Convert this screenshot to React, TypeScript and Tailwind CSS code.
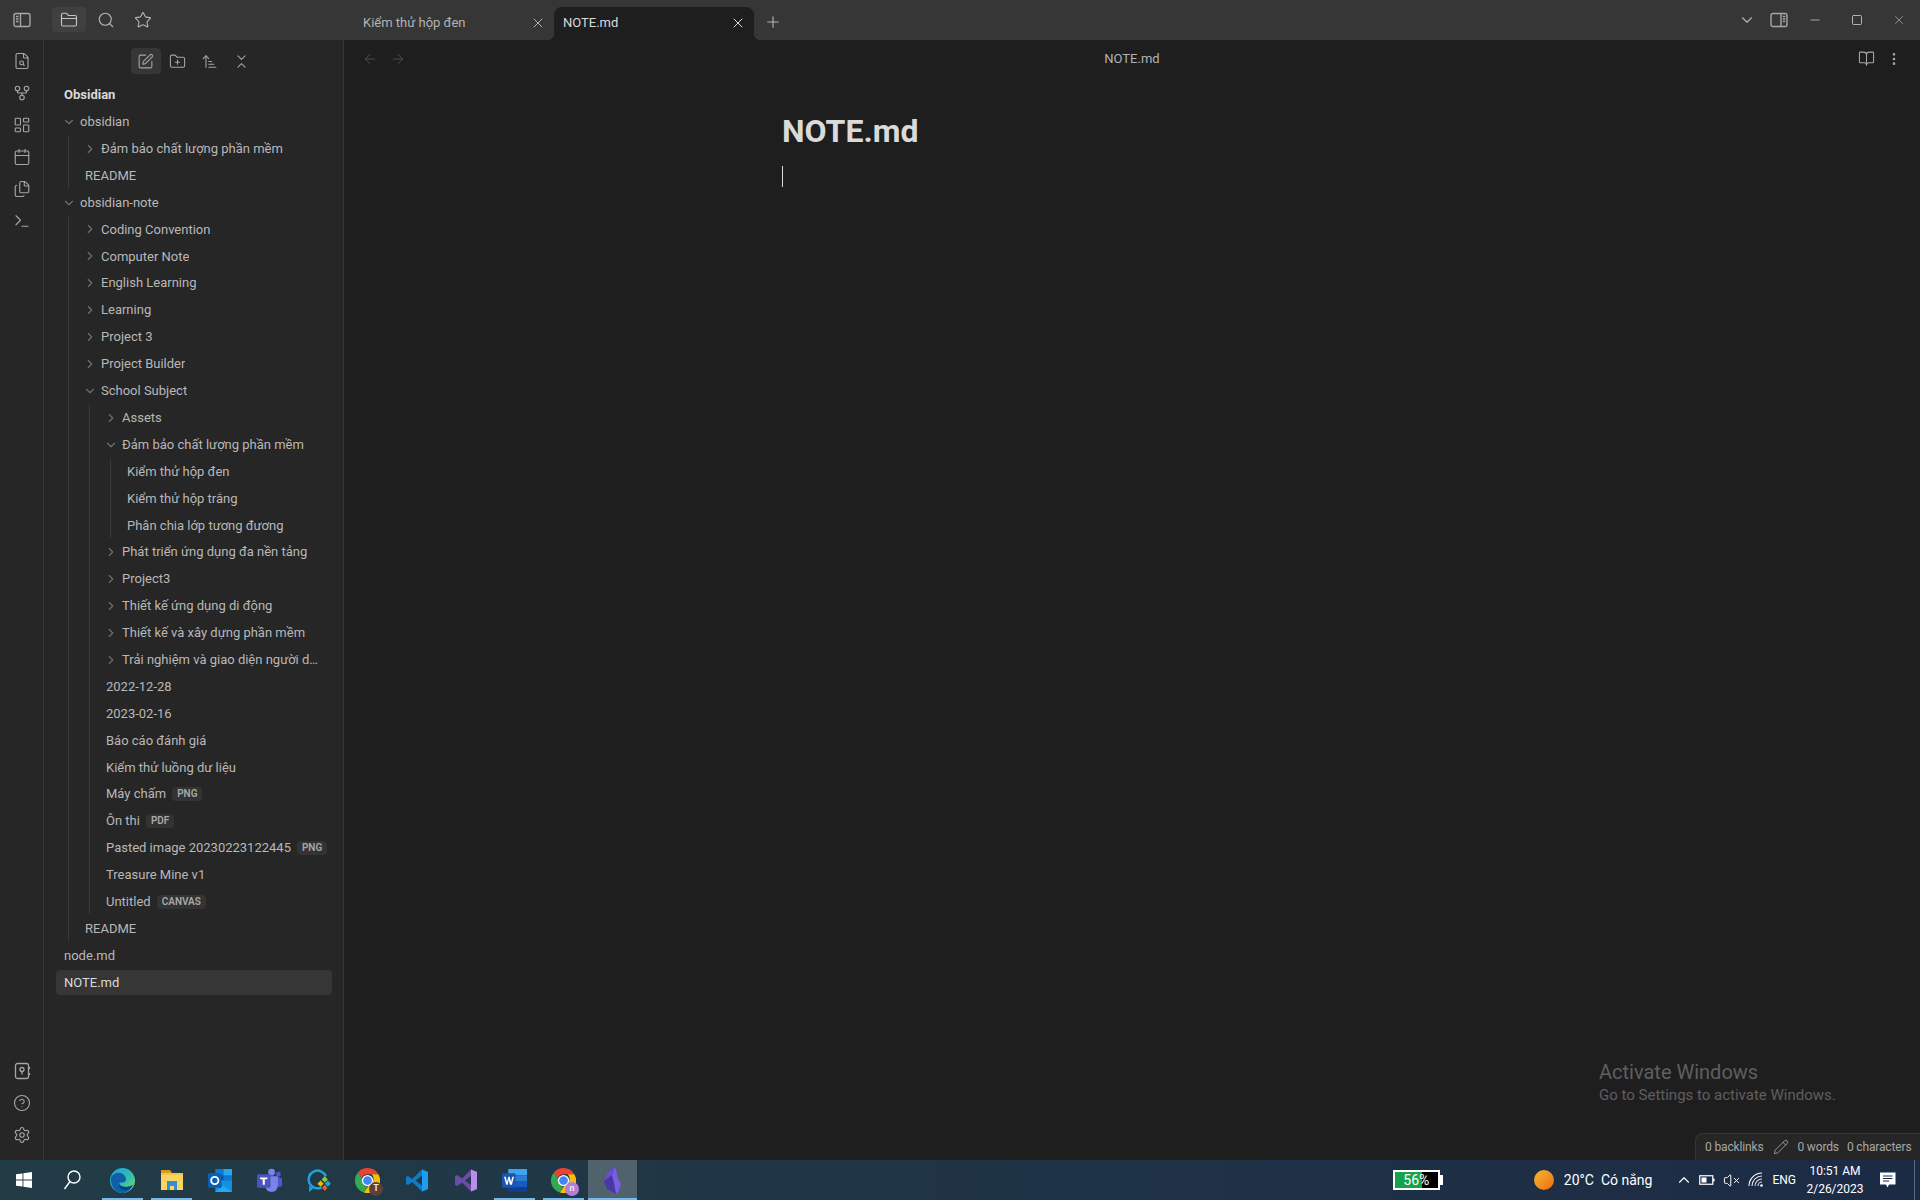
import React from 'react';
import {
  FolderClosed, Search, Star, FileSearch, GitFork, LayoutDashboard, Calendar, Files, Terminal,
  CircleHelp, Settings, SquarePen, FolderPlus, ArrowUpNarrowWide, ChevronsDownUp, ChevronDown,
  ChevronRight, X, Plus, ArrowLeft, ArrowRight, BookOpen, MoreVertical, Minus, Square, Pencil,
  VolumeX, ChevronUp,
} from 'lucide-react';

type TreeNode = { name: string; ext?: string; open?: boolean; children?: TreeNode[]; active?: boolean };

const tree: TreeNode[] = [
  {
    name: 'obsidian', open: true, children: [
      { name: 'Đảm bảo chất lượng phần mềm', children: [] },
      { name: 'README' },
    ],
  },
  {
    name: 'obsidian-note', open: true, children: [
      { name: 'Coding Convention', children: [] },
      { name: 'Computer Note', children: [] },
      { name: 'English Learning', children: [] },
      { name: 'Learning', children: [] },
      { name: 'Project 3', children: [] },
      { name: 'Project Builder', children: [] },
      {
        name: 'School Subject', open: true, children: [
          { name: 'Assets', children: [] },
          {
            name: 'Đảm bảo chất lượng phần mềm', open: true, children: [
              { name: 'Kiểm thử hộp đen' },
              { name: 'Kiểm thử hộp trắng' },
              { name: 'Phân chia lớp tương đương' },
            ],
          },
          { name: 'Phát triển ứng dụng đa nền tảng', children: [] },
          { name: 'Project3', children: [] },
          { name: 'Thiết kế ứng dụng di động', children: [] },
          { name: 'Thiết kế và xây dựng phần mềm', children: [] },
          { name: 'Trải nghiệm và giao diện người dùng', children: [] },
          { name: '2022-12-28' },
          { name: '2023-02-16' },
          { name: 'Báo cáo đánh giá' },
          { name: 'Kiểm thử luồng dư liệu' },
          { name: 'Máy chấm', ext: 'PNG' },
          { name: 'Ôn thi', ext: 'PDF' },
          { name: 'Pasted image 20230223122445', ext: 'PNG' },
          { name: 'Treasure Mine v1' },
          { name: 'Untitled', ext: 'CANVAS' },
        ],
      },
      { name: 'README' },
    ],
  },
  { name: 'node.md' },
  { name: 'NOTE.md', active: true },
];

const TreeRow: React.FC<{ node: TreeNode; root?: boolean }> = ({ node, root }) => {
  if (node.children) {
    return (
      <div>
        <div className={`flex items-center h-[25px] mb-[1.9px] pr-3 text-[#b8b8b8] ${root ? 'pl-[6px]' : 'pl-[14px]'}`}>
          <span className="w-[14px] mr-[4px] shrink-0 flex justify-center text-[#6f6f6f]">
            {node.open ? <ChevronDown size={14} strokeWidth={2} /> : <ChevronRight size={14} strokeWidth={2} />}
          </span>
          <span className="truncate">{node.name}</span>
        </div>
        {node.open && (
          <div className={`border-l border-[#3a3a3a] ${root ? 'ml-[12px]' : 'ml-[20px]'}`}>
            {node.children.map((c, i) => <TreeRow key={i} node={c} />)}
          </div>
        )}
      </div>
    );
  }
  return (
    <div
      className={`flex items-center h-[25px] mb-[1.9px] pr-[4px] rounded ${root ? 'pl-2' : 'pl-4'} ${node.active ? 'bg-[#363636] text-[#dadada]' : 'text-[#b8b8b8]'}`}
    >
      <span className="truncate">{node.name}</span>
      {node.ext && (
        <span className="ml-[6px] px-[5px] h-[14px] shrink-0 flex items-center rounded bg-[#333333] text-[#a8a8a8] text-[10px] font-semibold leading-none">
          {node.ext}
        </span>
      )}
    </div>
  );
};

const PanelLeftIcon = () => (
  <svg width="18" height="18" viewBox="0 0 18 18" fill="none" stroke="#a6a6a6" strokeWidth="1.4">
    <rect x="1" y="2.5" width="16" height="13" rx="2" />
    <path d="M7.5 2.5v13M3 5.500h2.500M3 8h2.500M3 10.500h2.500" />
  </svg>
);

const PanelRightIcon = () => (
  <svg width="18" height="18" viewBox="0 0 18 18" fill="none" stroke="#a6a6a6" strokeWidth="1.4">
    <rect x="1" y="2.5" width="16" height="13" rx="2" />
    <path d="M11 2.500v13M12.800 5.500h2.500M12.800 8h2.500M12.800 10.500h2.500" />
  </svg>
);

const VaultIcon = () => (
  <svg width="18" height="18" viewBox="0 0 18 18" fill="none" stroke="#a6a6a6" strokeWidth="1.3">
    <rect x="2.5" y="1.5" width="13" height="15" rx="2" />
    <circle cx="9" cy="7.5" r="2" />
    <path d="M9 9.500v3M16.500 5v2M16.500 11v2" />
  </svg>
);

const SmallBatteryIcon = () => (
  <svg width="16" height="12" viewBox="0 0 16 12" fill="none">
    <rect x="0.75" y="1.75" width="13" height="8.5" stroke="#fff" strokeWidth="1.2" />
    <rect x="2.5" y="3.5" width="5" height="5" fill="#fff" />
    <rect x="14" y="4.5" width="1.5" height="3" fill="#fff" />
  </svg>
);

const WifiFanIcon = () => (
  <svg width="16" height="16" viewBox="0 0 16 16" fill="none" stroke="#fff" strokeWidth="1.1">
    <path d="M1 14A13 13 0 0 1 14 1" />
    <path d="M4 14A10 10 0 0 1 14 4" opacity="0.85" />
    <path d="M7 14a7 7 0 0 1 7-7" opacity="0.85" />
    <path d="M10 14a4 4 0 0 1 4-4" opacity="0.85" />
    <circle cx="13.500" cy="13.500" r="1.300" fill="#fff" stroke="none" />
  </svg>
);

const TaskSearchIcon = () => (
  <svg width="18" height="20" viewBox="0 0 18 20" fill="none" stroke="#fff" strokeWidth="1.4">
    <circle cx="11" cy="7" r="6" />
    <path d="M7 11.500 1.500 19" />
  </svg>
);

const NotificationIcon = () => (
  <svg width="18" height="18" viewBox="0 0 18 18">
    <path d="M1 1.500h15.500v12H10l-1.500 3-1.500-3H1z" fill="#fff" />
    <path d="M4 5h9.500M4 7.500h9.500M4 10h6" stroke="#1c2b45" strokeWidth="1" />
  </svg>
);

const WindowsLogo = () => (
  <svg width="16" height="16" viewBox="0 0 16 16" fill="#fff">
    <path d="M0 2.300 6.500 1.400V7.500H0zM7.400 1.300 16 0V7.500H7.400zM0 8.400h6.500v6.200L0 13.700zM7.400 8.400H16V16l-8.600-1.200z" />
  </svg>
);

const EdgeIcon = () => (
  <svg width="25" height="25" viewBox="0 0 24 24">
    <defs>
      <linearGradient id="edgeTop" x1="0" y1="0" x2="1" y2="1">
        <stop offset="0" stopColor="#1b9de2" />
        <stop offset="0.6" stopColor="#35c1a8" />
        <stop offset="1" stopColor="#7fe05e" />
      </linearGradient>
    </defs>
    <circle cx="12" cy="12" r="12" fill="url(#edgeTop)" />
    <path d="M1 9C4 3 13 3 15 9c1 3-1 5-3 5s-3 0-3 1 3 4 8 3c2-.4 3.500-1 5-2-2 5-6 8-10 8C6 24 0 18 1 9z" fill="#0f5ea8" />
    <path d="M9 15c-1 3 2 7 7 6 3-.6 5-2.500 6-5-2 1.500-5 2.500-8 2-3-.4-5-1.500-5-3z" fill="#0b3f80" />
  </svg>
);

const ExplorerIcon = () => (
  <svg width="24" height="24" viewBox="0 0 24 24">
    <path d="M1 2h9l2 3H1z" fill="#d99a1f" />
    <rect x="1" y="5" width="22" height="17" fill="#fcd462" />
    <rect x="1" y="5" width="22" height="2" fill="#f5c542" />
    <path d="M7 13h10v9h-3v-4h-4v4H7z" fill="#2f8fd8" />
  </svg>
);

const OutlookIcon = () => (
  <svg width="25" height="25" viewBox="0 0 24 24">
    <rect x="7" y="1" width="16" height="12" fill="#0f78d4" />
    <rect x="15" y="1" width="8" height="6" fill="#28a8ea" />
    <rect x="7" y="7" width="8" height="6" fill="#0358a7" />
    <path d="M7 12h16v11H7z" fill="#1490df" />
    <path d="M7 23l8-6 8 6z" fill="#28a8ea" />
    <rect x="0" y="5" width="13" height="14" rx="1" fill="#0a5fb4" />
    <circle cx="6.500" cy="12" r="3.500" fill="none" stroke="#fff" strokeWidth="1.800" />
  </svg>
);

const TeamsIcon = () => (
  <svg width="25" height="25" viewBox="0 0 24 24">
    <circle cx="14" cy="4" r="3.200" fill="#7b83eb" />
    <circle cx="20.500" cy="6" r="2.300" fill="#5059c9" />
    <rect x="17" y="9" width="7" height="9" rx="2.500" fill="#5059c9" />
    <path d="M8 8h12v9a6 6 0 0 1-12 0z" fill="#7b83eb" />
    <rect x="0" y="6" width="13" height="13" rx="1" fill="#4b53bc" />
    <path d="M3 9h7v1.800H7.500V16h-2v-5.200H3z" fill="#fff" />
  </svg>
);

const AssistIcon = () => (
  <svg width="25" height="25" viewBox="0 0 24 24">
    <path d="M15 18.500A8.500 8.500 0 1 1 19 8" fill="none" stroke="#1ba1e2" strokeWidth="2.400" />
    <path d="M3 17v6l4-3z" fill="#1ba1e2" />
    <path d="M18 8l3 3-3 3-3-3z" fill="#8cc83c" />
    <path d="M14 12l3 3-3 3-3-3z" fill="#f4b400" />
    <path d="M21 12l3 3-3 3-3-3z" fill="#1ba1e2" />
    <path d="M18 16l2.500 3-2.500 3-2.500-3z" fill="#e8612c" />
  </svg>
);

const ChromeIcon: React.FC<{ badge: string; mark: string }> = ({ badge, mark }) => (
  <span className="relative w-[25px] h-[25px] block">
    <svg width="25" height="25" viewBox="0 0 24 24">
      <path d="M12 0a12 12 0 0 1 10.400 6H12a6 6 0 0 0-5.600 3.800L3 4a12 12 0 0 1 9-4z" fill="#ea4335" />
      <path d="M3 4l4.500 8a5 5 0 0 0 4 5.900L8.500 23.500A12 12 0 0 1 3 4z" fill="#34a853" />
      <path d="M22.400 6A12 12 0 0 1 8.500 23.500l4-6a6 6 0 0 0 5-5.500 6 6 0 0 0-1.500-6z" fill="#fbbc05" />
      <circle cx="12" cy="12" r="5.400" fill="#fff" />
      <circle cx="12" cy="12" r="4.200" fill="#4285f4" />
    </svg>
    <span className="absolute -right-[3px] -bottom-[3px] w-[14px] h-[14px] rounded-full flex items-center justify-center text-[9px] font-bold text-[#f0e6e0] leading-none" style={{ backgroundColor: badge }}>
      {mark}
    </span>
  </span>
);

const VSCodeIcon = () => (
  <svg width="24" height="25" viewBox="0 0 24 24">
    <path d="M17 1 7 10.500 3 7.500 1 8.500v7l2 1 4-3L17 23l6-2.500v-17zM17 7v10l-6.500-5z" fill="#0c7cc5" fillRule="evenodd" />
    <path d="M17 1l6 2.500v17L17 23z" fill="#1f9cf0" />
  </svg>
);

const VSIcon = () => (
  <svg width="24" height="25" viewBox="0 0 24 24">
    <path d="M17 1 8 10 3.500 6.500 1 7.500v9l2.500 1L8 14l9 9 6-2.500v-17zM17 7.500v9L11 12z" fill="#6d4ba8" fillRule="evenodd" />
    <path d="M17 1l6 2.500v17L17 23z" fill="#b98ee8" />
  </svg>
);

const WordIcon = () => (
  <svg width="25" height="25" viewBox="0 0 24 24">
    <rect x="6" y="1" width="18" height="6" fill="#41a5ee" />
    <rect x="6" y="7" width="18" height="6" fill="#2b7cd3" />
    <rect x="6" y="13" width="18" height="5.500" fill="#185abd" />
    <rect x="6" y="18.500" width="18" height="4.500" fill="#103f91" />
    <rect x="0" y="5" width="13" height="14" rx="1" fill="#1a55ae" />
    <path d="M2 8.500h1.600l1.200 5 1.300-5h1.300l1.300 5 1.200-5h1.600l-2 7.500H7.600L6.500 11.500 5.400 16H4z" fill="#fff" />
  </svg>
);

const ObsidianIcon = () => (
  <svg width="20" height="28" viewBox="0 0 20 28">
    <path d="M12 0 4 7 1 15l3 8 9 5 3-3 2-7-3-6z" fill="#4a37a6" />
    <path d="M12 0 9 9l2 8 2 11 3-3 2-7-3-6z" fill="#7a5fe0" />
    <path d="M12 0 4 7 1 15l8-6z" fill="#6a50cf" />
  </svg>
);

type TaskItem = { icon: React.ReactNode; running?: boolean; selected?: boolean };

const taskItems: TaskItem[] = [
  { icon: <EdgeIcon />, running: true },
  { icon: <ExplorerIcon />, running: true },
  { icon: <OutlookIcon /> },
  { icon: <TeamsIcon /> },
  { icon: <AssistIcon /> },
  { icon: <ChromeIcon badge="#5d4037" mark="T" /> },
  { icon: <VSCodeIcon /> },
  { icon: <VSIcon /> },
  { icon: <WordIcon />, running: true },
  { icon: <ChromeIcon badge="#b57edc" mark="n" />, running: true },
  { icon: <ObsidianIcon />, running: true, selected: true },
];

const ribbonTop = [FileSearch, GitFork, LayoutDashboard, Calendar, Files, Terminal];

export default function App() {
  return (
    <div className="w-[1920px] h-[1200px] flex flex-col overflow-hidden bg-[#1e1e1e] text-[13px] font-['Roboto','Liberation_Sans',sans-serif]">
      {/* title bar */}
      <div className="h-10 shrink-0 flex bg-[#363636] text-[#b3b3b3]">
        <div className="w-[344px] shrink-0 flex items-center pl-[13px]">
          <PanelLeftIcon />
          <div className="ml-[21px] w-[34px] h-[25px] mt-[-1px] rounded bg-[#404040] flex items-center justify-center text-[#c4c4c4]">
            <FolderClosed size={18} strokeWidth={1.5} />
          </div>
          <Search size={18} strokeWidth={1.5} className="ml-[11px]" />
          <Star size={18} strokeWidth={1.5} className="ml-[19px]" />
        </div>
        <div className="flex-1 flex items-end pl-[10px]">
          <div className="w-[200px] h-[33px] flex items-center justify-between pl-[9px] pr-[8px] pb-[2px]">
            <span>Kiểm thử hộp đen</span>
            <X size={16} strokeWidth={1.5} />
          </div>
          <div className="relative w-[200px] h-[33px] flex items-center justify-between pl-[9px] pr-[8px] pb-[2px] bg-[#1e1e1e] rounded-t-lg text-[#dadada]">
            <span className="absolute -left-[6px] bottom-0 w-[6px] h-[6px] bg-[radial-gradient(circle_at_0_0,#363636_6px,#1e1e1e_6px)]" />
            <span>NOTE.md</span>
            <X size={16} strokeWidth={1.5} />
            <span className="absolute -right-[6px] bottom-0 w-[6px] h-[6px] bg-[radial-gradient(circle_at_100%_0,#363636_6px,#1e1e1e_6px)]" />
          </div>
          <div className="w-[38px] h-[33px] pb-[4px] flex items-center justify-center">
            <Plus size={18} strokeWidth={1.5} />
          </div>
          <div className="flex-1" />
          <div className="h-10 self-start flex items-center">
            <ChevronDown size={18} strokeWidth={1.5} />
            <span className="ml-[14px]"><PanelRightIcon /></span>
            <Minus size={14} strokeWidth={1.5} className="ml-[20px]" />
            <Square size={12} strokeWidth={2} className="ml-[29px]" />
            <X size={14} strokeWidth={1.2} className="ml-[29px] mr-[14px]" />
          </div>
        </div>
      </div>

      {/* workspace */}
      <div className="flex-1 flex min-h-0">
        <div className="w-11 shrink-0 flex flex-col items-center justify-between bg-[#262626] border-r border-[#363636] pt-[12px] pb-[16px] text-[#a6a6a6]">
          <div className="flex flex-col gap-[14px]">
            {ribbonTop.map((Icon, i) => <Icon key={i} size={18} strokeWidth={1.5} />)}
          </div>
          <div className="flex flex-col gap-[14px]">
            <VaultIcon />
            <CircleHelp size={18} strokeWidth={1.5} />
            <Settings size={18} strokeWidth={1.5} />
          </div>
        </div>

        <div className="w-[300px] shrink-0 bg-[#262626] border-r border-[#363636] flex flex-col">
          <div className="h-[42.5px] pt-2 pl-[2px] flex justify-center items-start text-[#a6a6a6]">
            <div className="w-[30px] h-[26px] flex items-center justify-center rounded bg-[#363636]">
              <SquarePen size={17} strokeWidth={1.5} />
            </div>
            <div className="w-[34px] h-[26px] flex items-center justify-center"><FolderPlus size={17} strokeWidth={1.5} /></div>
            <div className="w-[30px] h-[26px] flex items-center justify-center"><ArrowUpNarrowWide size={17} strokeWidth={1.5} /></div>
            <div className="w-[34px] h-[26px] flex items-center justify-center"><ChevronsDownUp size={17} strokeWidth={1.5} /></div>
          </div>
          <div className="pl-3 pr-[11px]">
            <div className="h-[25px] mb-[1.9px] pl-2 flex items-center font-bold text-[#dadada]">Obsidian</div>
            {tree.map((n, i) => <TreeRow key={i} node={n} root />)}
          </div>
        </div>

        <div className="relative flex-1 flex flex-col min-w-0">
          <div className="h-[37px] shrink-0 flex items-center pl-[18px] pr-[18px] text-[#a6a6a6]">
            <ArrowLeft size={16} strokeWidth={1.5} className="text-[#4d4d4d]" />
            <ArrowRight size={16} strokeWidth={1.5} className="ml-[12px] text-[#4d4d4d]" />
            <div className="flex-1 text-center text-[#b3b3b3]">NOTE.md</div>
            <BookOpen size={17} strokeWidth={1.5} />
            <MoreVertical size={16} strokeWidth={2} className="ml-[11px]" />
          </div>
          <div className="w-[700px] mx-auto pt-[32px]">
            <h1 className="text-[32px] leading-[44px] font-bold text-[#dadada]">NOTE.md</h1>
            <div className="mt-[13px] w-px h-[21px] bg-[#dadada]" />
          </div>

          <div className="absolute left-[1255px] top-[1019px] text-[#5f5f5f] leading-none">
            <div className="text-[20px] leading-[26px]">Activate Windows</div>
            <div className="text-[15px] leading-[20px]">Go to Settings to activate Windows.</div>
          </div>

          <div className="absolute right-0 bottom-0 w-[225px] h-[27px] flex items-center pl-[9px] bg-[#262626] border-t border-l border-[#363636] rounded-tl-lg text-[12px] tracking-[-0.15px] text-[#a6a6a6] whitespace-nowrap">
            <span>0 backlinks</span>
            <Pencil size={16} strokeWidth={1.3} className="ml-[10px]" />
            <span className="ml-[8px]">0 words</span>
            <span className="ml-[8px]">0 characters</span>
          </div>
        </div>
      </div>

      {/* taskbar */}
      <div className="h-10 shrink-0 flex items-stretch bg-[linear-gradient(90deg,#223c46,#1c2b45)] text-white">
        <div className="w-12 flex items-center justify-center"><WindowsLogo /></div>
        <div className="w-12 flex items-center justify-center"><TaskSearchIcon /></div>
        <div className="flex ml-[2px]">
          {taskItems.map((t, i) => (
            <div key={i} className={`relative w-[49px] flex items-center justify-center ${t.selected ? 'bg-[#50626c]' : ''}`}>
              {t.icon}
              {t.running && <span className={`absolute bottom-0 h-[2px] bg-[#76b9ed] ${t.selected ? 'inset-x-0' : 'inset-x-1'}`} />}
            </div>
          ))}
        </div>
        <div className="flex-1" />
        <div className="flex items-center">
          <div className="relative w-[47px] h-[20px] border-2 border-white bg-black flex text-[14px] leading-none">
            <div className="w-[27px] bg-[#16a34a]" />
            <span className="absolute inset-0 flex items-center justify-center">56%</span>
            <span className="absolute -right-[5px] top-[3px] w-[3px] h-[10px] bg-white" />
          </div>
          <div className="ml-[94px] w-[20px] h-[20px] rounded-full bg-[linear-gradient(135deg,#f6b733,#ef6c12)]" />
          <span className="ml-[10px] text-[14px]">20°C</span>
          <span className="ml-[7px] text-[14px]">Có nắng</span>
          <ChevronUp size={18} strokeWidth={1.5} className="ml-[23px]" />
          <span className="ml-[6px]"><SmallBatteryIcon /></span>
          <VolumeX size={17} strokeWidth={1.4} className="ml-[8px]" />
          <span className="ml-[8px]"><WifiFanIcon /></span>
          <span className="ml-[8px] text-[12px]">ENG</span>
          <div className="ml-[11px] w-[56px] flex flex-col items-center text-[12px] leading-[18px]">
            <span>10:51 AM</span>
            <span>2/26/2023</span>
          </div>
          <span className="ml-[16px]"><NotificationIcon /></span>
          <span className="ml-[17px] w-px h-full bg-[#5c6b80]" />
          <span className="w-[5px]" />
        </div>
      </div>
    </div>
  );
}
